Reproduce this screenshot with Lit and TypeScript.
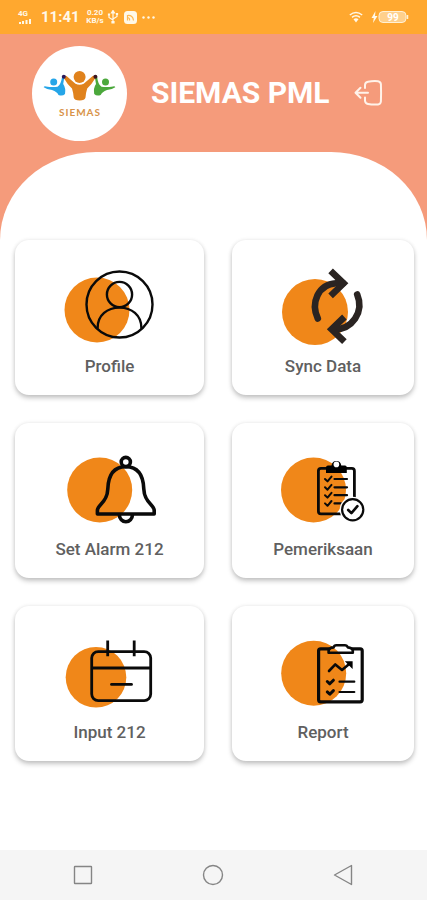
import { LitElement, html, css, svg } from "lit";
import { customElement } from "lit/decorators.js";

const profile = svg`
  <circle class="spot" cx="37" cy="45" r="32.5"/>
  <g class="ink" stroke-width="2.4">
    <circle cx="59.5" cy="39.5" r="33"/>
    <circle cx="59.5" cy="29.5" r="12.6"/>
    <path d="M37.6 63C37.6 50 47.5 42.6 59.5 42.6S81.4 50 81.4 63"/>
  </g>`;

const sync = svg`
  <circle class="spot" cx="42" cy="47" r="33"/>
  <g class="ink soft" stroke-width="6.6">
    <path d="M44.8 53.5C37.5 38 45 19.500 63 18.300H70"/>
    <path d="M84.2 29.500C91.500 47 79 64.500 61 64.300"/>
    <path stroke-linecap="butt" stroke-linejoin="miter" d="M57.6 5.800L70.600 18.300L57.600 30.800M71.400 52L58.600 64.300L71.400 76.600"/>
  </g>`;

const alarm = svg`
  <circle class="spot" cx="39.7" cy="42" r="32.5"/>
  <g class="ink" stroke-width="3.6">
    <circle cx="65.8" cy="14" r="4.6"/>
    <path d="M37.4 66V62.5C37.4 56 47.2 55.5 47.8 41C48.2 29 52.5 18.8 65.8 18.8S83.4 29 83.8 41C84.4 55.5 94.2 56 94.2 62.5V66Z"/>
    <path d="M59.4 67A6.5 6.8 0 0 0 72.4 67"/>
  </g>`;

const inspection = svg`
  <circle class="spot" cx="40.5" cy="42" r="32.5"/>
  <g class="ink" stroke-width="2.8">
    <rect x="45.4" y="20.4" width="36" height="45.4" rx="2.6"/>
    <path stroke-width="2.2" d="M61.5 31H74M61.5 39.3H74M61.5 47.2H74M61.5 55.4H68"/>
    <path stroke-width="2" d="M52 31L54.5 33.4L58.5 28.6M52 39.3L54.5 41.7L58.5 36.9M52 47.2L54.5 49.6L58.5 44.8M52 55.4L54.5 57.8L58.5 53"/>
  </g>
  <path d="M53 25V19.5Q53 17.5 55 17.5H58.5A5 5.6 0 0 1 68.3 17.5H72Q73.8 17.5 73.8 19.5V25Z"/>
  <circle class="paper" cx="63.4" cy="16.4" r="2.8"/>
  <circle class="paper" cx="79.7" cy="61.7" r="13"/>
  <g class="ink" stroke-width="2.2">
    <circle cx="79.7" cy="61.7" r="10.6"/>
    <path stroke-width="2.6" d="M75.2 62L78.4 65.2L84.4 58.2"/>
  </g>`;

const calendar = svg`
  <circle class="spot" cx="36" cy="46.3" r="30.3"/>
  <g class="ink" stroke-width="2.8">
    <rect x="31.7" y="20.6" width="59" height="49" rx="6.5"/>
    <path stroke-linecap="butt" d="M31.7 37H90.7M47.7 9.5V25.2M74.2 9.5V25.2"/>
    <path d="M51.5 53.4H71.5"/>
  </g>`;

const report = svg`
  <circle class="spot" cx="40.7" cy="42.3" r="32.5"/>
  <g class="ink" stroke-width="3.2">
    <path d="M56 17.8H47.6Q45.6 17.8 45.6 19.8V68.8Q45.6 70.8 47.6 70.8H87.2Q89.2 70.8 89.2 68.8V19.8Q89.2 17.8 87.2 17.8H79.4"/>
    <path stroke-width="2.6" d="M55.6 21.8V19.5Q56.4 16.6 60.6 16.4Q61.2 14.2 63.4 14.2H71.8Q74 14.2 74.8 16.4Q79.2 16.8 79.8 19.5V21.8Z"/>
    <path stroke-width="2.6" d="M56 40L62.3 33.4L69 39L76.5 32.8"/>
    <path stroke-width="2.2" d="M66.5 50.7H81.3M66.5 61H81.3"/>
    <path stroke-width="3" d="M54.3 50.5L56.8 52.8L60.4 49.2M54.3 60.9L56.8 63.2L60.4 59.6"/>
  </g>
  <path d="M71.8 30.2H79.6V38Z"/>`;

const items = [
  { label: "Profile", icon: profile },
  { label: "Sync Data", icon: sync },
  { label: "Set Alarm 212", icon: alarm },
  { label: "Pemeriksaan", icon: inspection },
  { label: "Input 212", icon: calendar },
  { label: "Report", icon: report },
];

@customElement("menu-card")
class MenuCard extends LitElement {
  static properties = { label: {}, icon: { attribute: false } };
  declare label: string;
  declare icon: unknown;

  static styles = css`
    :host { display: block; }
    .card {
      display: flex;
      flex-direction: column;
      align-items: center;
      gap: 11px;
      width: 100%;
      margin: 0;
      padding: 25px 0 19px;
      border: 0;
      border-radius: 14px;
      background: #fff;
      box-shadow: 0 3px 5px rgba(0, 0, 0, 0.22), 0 0 4px rgba(0, 0, 0, 0.08);
      color: #606060;
      font: 500 17px/20px Roboto, "Liberation Sans", sans-serif;
      cursor: pointer;
    }
    .icon { display: block; width: 100px; height: 80px; }
    .spot { fill: #f08719; }
    .paper { fill: #fff; }
    .ink { fill: none; stroke: #0a0a0a; stroke-linecap: round; stroke-linejoin: round; }
    .soft { stroke: #2a2422; }
  `;

  render() {
    return html`<button class="card" type="button">
      <svg class="icon" viewBox="0 0 100 80" aria-hidden="true">${this.icon}</svg>
      <span>${this.label}</span>
    </button>`;
  }
}

@customElement("app-root")
class AppRoot extends LitElement {
  static styles = css`
    :host {
      display: flex;
      flex-direction: column;
      min-height: 100vh;
      background: #f59b7b;
      font-family: Roboto, "Liberation Sans", sans-serif;
    }
    .status {
      display: flex;
      align-items: center;
      height: 34px;
      padding: 0 18px;
      box-sizing: border-box;
      background: #ffa82f;
      color: #fff8e8;
    }
    .status svg { display: block; flex: none; }
    .signal { display: flex; flex-direction: column; gap: 1px; width: 23px; }
    .tiny { font-size: 8px; line-height: 8px; font-weight: 700; }
    .time { width: 42px; font-size: 15px; line-height: 20px; font-weight: 700; }
    .rate { width: 24px; text-align: center; }
    .marks { display: flex; align-items: center; gap: 5px; }
    .power { display: flex; align-items: center; margin-left: auto; gap: 7px; }
    .header {
      display: flex;
      align-items: center;
      height: 118px;
      padding: 0 44px 0 32px;
    }
    .logo { display: block; flex: none; width: 95px; height: 95px; }
    .brand { font: 700 10px "Lato", sans-serif; letter-spacing: 1px; fill: #d8934a; }
    .title {
      flex: 1;
      margin: 0 0 0 24px;
      color: #fff;
      font-size: 30px;
      line-height: 36px;
      font-weight: 700;
      white-space: nowrap;
    }
    .logout {
      flex: none;
      padding: 0;
      border: 0;
      background: none;
      cursor: pointer;
    }
    .logout svg { display: block; }
    .sheet {
      flex: 1;
      padding: 88px 13px 28px 15px;
      border-radius: 96px 96px 0 0 / 88px 88px 0 0;
      background: #fff;
    }
    .grid {
      display: grid;
      grid-template-columns: 189fr 182fr;
      gap: 28px;
    }
    .nav {
      display: grid;
      grid-template-columns: repeat(3, 1fr);
      height: 50px;
      padding: 0 18px;
      background: #f5f5f5;
    }
    .nav button {
      display: grid;
      place-items: center;
      padding: 0;
      border: 0;
      background: none;
      cursor: pointer;
    }
    .nav svg { display: block; fill: none; stroke: #858585; stroke-width: 1.4; stroke-linejoin: round; }
  `;

  render() {
    return html`
      <div class="status">
        <div class="signal">
          <span class="tiny">4G</span>
          <svg width="13" height="5" viewBox="0 0 13 5" fill="currentColor" aria-hidden="true">
            <path d="M1 3h2v2H1zM4 2h2v3H4zM7.500 1h2v4h-2zM11 0h2v5h-2z"/>
          </svg>
        </div>
        <div class="time">11:41</div>
        <div class="rate tiny">0.20<br />KB/s</div>
        <div class="marks">
          <svg width="12" height="14" viewBox="0 0 12 14" fill="none" stroke="currentColor" stroke-width="1.200" aria-hidden="true">
            <path d="M6 2V12M2 5V7.500L6 10M10 4V6.500L6 9"/>
            <path fill="currentColor" d="M6 .5L7.500 3H4.500ZM5 11.500H7V13H5ZM1.500 4H2.500V5H1.500ZM9.500 3.500H10.500V4.500H9.500Z"/>
          </svg>
          <svg width="13" height="13" viewBox="0 0 13 13" aria-hidden="true">
            <rect width="13" height="13" rx="3.500" fill="currentColor"/>
            <path d="M3.500 9.500V4.500Q9 4 9.500 9.500M5.500 9.500Q6 7 3.500 6.500" fill="none" stroke="#ffb850" stroke-width="1.200"/>
          </svg>
          <svg width="13" height="3" viewBox="0 0 13 3" fill="currentColor" aria-hidden="true">
            <circle cx="1.500" cy="1.500" r="1.200"/><circle cx="6.500" cy="1.500" r="1.200"/><circle cx="11.500" cy="1.500" r="1.200"/>
          </svg>
        </div>
        <div class="power">
          <svg width="14" height="12" viewBox="0 0 14 12" fill="none" stroke="currentColor" stroke-width="1.500" aria-hidden="true">
            <path d="M.8 4Q7-1 13.200 4M3 6.400Q7 3 11 6.400"/>
            <path fill="currentColor" stroke="none" d="M4.500 8.200Q7 6.300 9.500 8.200L7 11.500Z"/>
          </svg>
          <svg width="39" height="14" viewBox="0 0 39 14" aria-hidden="true">
            <path fill="currentColor" d="M5.500 1L1.500 8H3.800L3 13L7.500 6H5Z"/>
            <rect x="9" y="1.500" width="27" height="11" rx="4" fill="#ffd08c" stroke="#fff1d6"/>
            <path d="M37.500 5V9" stroke="#fff1d6" stroke-width="1.500"/>
            <text x="23" y="10.500" text-anchor="middle" font-size="10" font-weight="700" fill="#fff">99</text>
          </svg>
        </div>
      </div>

      <header class="header">
        <svg class="logo" viewBox="0 0 95 95" role="img" aria-label="SIEMAS">
          <circle cx="47.500" cy="47.500" r="47.500" fill="#fff"/>
          <circle cx="21.700" cy="36" r="3.500" fill="#25a5e8"/>
          <path fill="#25a5e8" d="M30.200 30Q31.500 29.200 32.500 30.200L31.200 38Q34 42 33 48Q30.500 50.500 26.500 49Q25.300 46 20 44Q14.500 43.500 11.700 41.300Q12 40 14 40.500Q20 41.500 25.500 40.800Q29 39 30.200 30Z"/>
          <circle cx="73.500" cy="36" r="3.500" fill="#4ba83c"/>
          <path fill="#4ba83c" d="M65 30Q63.700 29.200 62.700 30.200L64 38Q61.200 42 62.200 48Q64.700 50.500 68.700 49Q70 46 75 44Q80.500 43.500 83.300 41.300Q83 40 81 40.500Q75 41.500 69.500 40.800Q66 39 65 30Z"/>
          <circle cx="47.600" cy="31" r="6" fill="#e0821c"/>
          <path fill="#e0821c" d="M31.500 31.500Q32 29 34.500 30L43.500 37.800Q47.600 39.500 51.700 37.800L60.700 30Q63.200 29 63.700 31.500Q60 38 55.200 42.500Q54 46 53.500 51.500Q53 54.500 47.600 54.500T41.700 51.500Q41.200 46 40 42.500Q35 38 31.500 31.500Z"/>
          <circle cx="31.800" cy="30.800" r="2" fill="#2b1a5c"/>
          <circle cx="63.400" cy="30.800" r="2" fill="#3a1420"/>
          <text class="brand" x="48" y="69.500" text-anchor="middle">SIEMAS</text>
        </svg>
        <h1 class="title">SIEMAS PML</h1>
        <button class="logout" type="button" aria-label="Log out">
          <svg width="29" height="28" viewBox="0 0 29 28" fill="none" stroke="#fff3ea" stroke-width="2" stroke-linecap="round" stroke-linejoin="round" aria-hidden="true">
            <path d="M11 9V6Q11.200 3.200 14 2.700Q19 1.800 24 2.200Q26.600 2.500 26.900 5.200Q27.300 14 26.900 22.500Q26.600 25.200 24 25.500Q19 25.900 14 25Q11.200 24.500 11 21.700V18.500"/>
            <path d="M14 13.800H2M6.500 8.800L1.500 13.800L6.500 18.800"/>
          </svg>
        </button>
      </header>

      <main class="sheet">
        <div class="grid">
          ${items.map((i) => html`<menu-card .label=${i.label} .icon=${i.icon}></menu-card>`)}
        </div>
      </main>

      <nav class="nav" aria-label="System">
        <button type="button" aria-label="Recent apps">
          <svg width="22" height="22" viewBox="0 0 22 22"><rect x="2.500" y="2.500" width="17" height="17" rx=".5"/></svg>
        </button>
        <button type="button" aria-label="Home">
          <svg width="22" height="22" viewBox="0 0 22 22"><circle cx="11" cy="11" r="9.500"/></svg>
        </button>
        <button type="button" aria-label="Back">
          <svg width="22" height="22" viewBox="0 0 22 22"><path d="M18.500 1.500V20.500L1.500 11Z"/></svg>
        </button>
      </nav>
    `;
  }
}
